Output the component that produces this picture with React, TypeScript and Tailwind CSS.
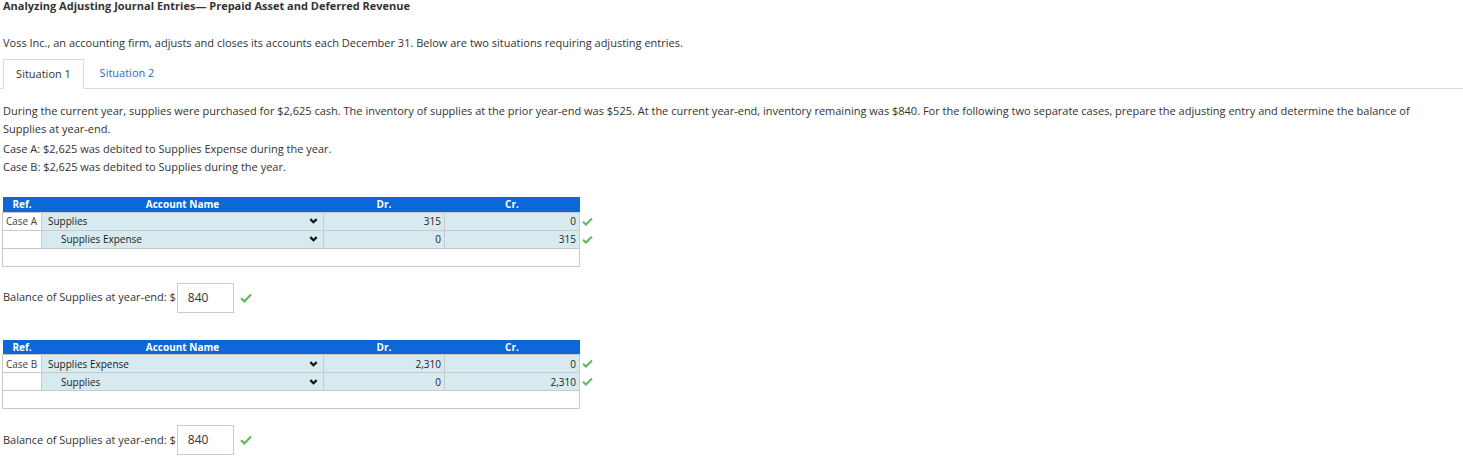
import React from "react";

type Line = { account: string; indent: boolean; dr: string; cr: string };

const font = { fontFamily: '"Open Sans", "Liberation Sans", sans-serif' };

function Check({ className = "" }: { className?: string }) {
  return (
    <svg viewBox="0 0 12 10" className={`h-[9px] w-[11px] ${className}`}>
      <path d="M1 5.2 L4.3 8.4 L11 1.6" fill="none" stroke="#5cb85c" strokeWidth="2.2" />
    </svg>
  );
}

function Chevron() {
  return (
    <svg viewBox="0 0 10 7" className="h-[6px] w-[9px]">
      <path d="M1.3 1.3 L5 5 L8.7 1.3" fill="none" stroke="#111" strokeWidth="2.6" />
    </svg>
  );
}

function JournalTable({ caseLabel, lines }: { caseLabel: string; lines: Line[] }) {
  return (
    <div className="ml-[2px] flex items-start">
      <table className="w-[577px] table-fixed border-collapse text-[10px] leading-[14px] text-[#222]">
        <colgroup>
          <col className="w-[39px]" />
          <col className="w-[282px]" />
          <col className="w-[121px]" />
          <col className="w-[135px]" />
        </colgroup>
        <thead>
          <tr className="h-[15px] bg-[#0b68d6] text-white">
            <th className="font-bold">Ref.</th>
            <th className="font-bold">Account Name</th>
            <th className="font-bold">Dr.</th>
            <th className="font-bold">Cr.</th>
          </tr>
        </thead>
        <tbody>
          {lines.map((l, i) => (
            <tr key={i} className="h-[18px]">
              <td className="overflow-hidden whitespace-nowrap border border-[#c9c9c9] bg-white pl-[3px] text-[#444]">
                {i === 0 ? caseLabel : ""}
              </td>
              <td className="border border-[#c9c9c9] bg-[#d6eaf0] p-0">
                <div className={`flex items-center justify-between pr-[5px] ${l.indent ? "pl-[19px]" : "pl-[6px]"}`}>
                  <span>{l.account}</span>
                  <Chevron />
                </div>
              </td>
              <td className="border border-[#c9c9c9] bg-[#d6eaf0] pr-[3px] text-right">{l.dr}</td>
              <td className="border border-[#c9c9c9] bg-[#d6eaf0] pr-[3px] text-right">{l.cr}</td>
            </tr>
          ))}
          <tr className="h-[18px]">
            <td colSpan={4} className="border border-[#c9c9c9] bg-white" />
          </tr>
        </tbody>
      </table>
      <div className="ml-[2px] flex flex-col pt-[15px]">
        <div className="flex h-[18px] items-center">
          <Check />
        </div>
        <div className="flex h-[18px] items-center">
          <Check />
        </div>
      </div>
    </div>
  );
}

function Balance() {
  return (
    <div className="ml-[3px] flex items-center text-[11px] text-[#333]">
      <span>Balance of Supplies at year-end: $</span>
      <div className="ml-[1px] flex h-[30px] w-[57px] items-center border border-[#c5ccd6] bg-white pl-[10px] text-[12px] text-[#333]">
        840
      </div>
      <Check className="ml-[6px] h-[10px] w-[12px]" />
    </div>
  );
}

export default function App() {
  return (
    <div className="min-h-screen w-[1463px] bg-white text-[#333]" style={font}>
      <h1 className="ml-[3px] text-[11px] font-bold leading-[12px] text-[#333]">
        Analyzing Adjusting Journal Entries— Prepaid Asset and Deferred Revenue
      </h1>
      <p className="ml-[3px] mt-[24px] text-[11px] leading-[14px]">
        Voss Inc., an accounting firm, adjusts and closes its accounts each December 31. Below are two situations
        requiring adjusting entries.
      </p>
      <div className="mt-[9px] flex border-b border-[#dcdcdc] pl-[3px] text-[11px]">
        <div className="-mb-px flex h-[30px] w-[81px] items-center justify-center border border-b-0 border-[#dcdcdc] bg-white text-[#333]">
          Situation 1
        </div>
        <div className="flex h-[29px] w-[86px] items-center justify-center text-[#2e6db4]">Situation 2</div>
      </div>
      <div className="ml-[3px] mr-[20px] mt-[13px] text-[11px] leading-[18px]">
        <p>
          During the current year, supplies were purchased for $2,625 cash. The inventory of supplies at the prior
          year-end was $525. At the current year-end, inventory remaining was $840. For the following two separate
          cases, prepare the adjusting entry and determine the balance of Supplies at year-end.
        </p>
        <p className="mt-[2px]">Case A: $2,625 was debited to Supplies Expense during the year.</p>
        <p>Case B: $2,625 was debited to Supplies during the year.</p>
      </div>
      <div className="mt-[21px]">
        <JournalTable
          caseLabel="Case A"
          lines={[
            { account: "Supplies", indent: false, dr: "315", cr: "0" },
            { account: "Supplies Expense", indent: true, dr: "0", cr: "315" },
          ]}
        />
      </div>
      <div className="mt-[16px]">
        <Balance />
      </div>
      <div className="mt-[27px]">
        <JournalTable
          caseLabel="Case B"
          lines={[
            { account: "Supplies Expense", indent: false, dr: "2,310", cr: "0" },
            { account: "Supplies", indent: true, dr: "0", cr: "2,310" },
          ]}
        />
      </div>
      <div className="mt-[16px]">
        <Balance />
      </div>
    </div>
  );
}
